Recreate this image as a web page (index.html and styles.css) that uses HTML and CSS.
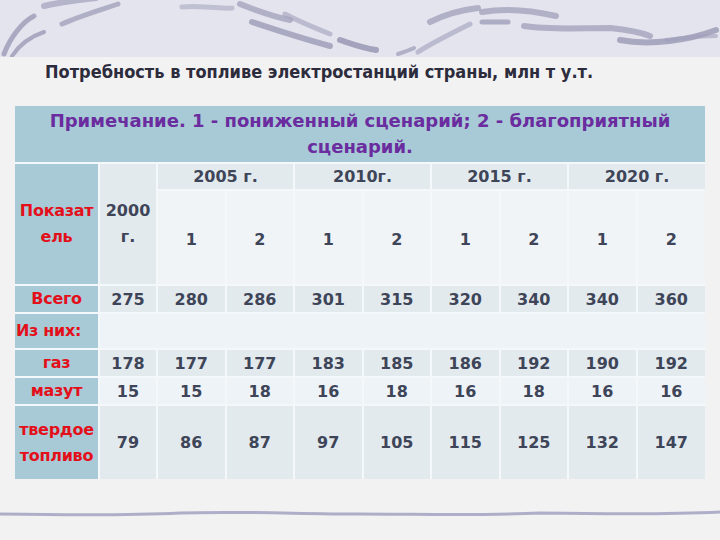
FILE: index.html
```
<!DOCTYPE html>
<html lang="ru">
<head>
<meta charset="utf-8">
<title>Потребность в топливе</title>
<link rel="stylesheet" href="styles.css">
</head>
<body>
<div class="banner">
  <svg class="strokes" width="720" height="57" viewBox="0 0 720 57">
    <g fill="none" stroke-linecap="round">
      <path d="M4 54 C10 38 22 22 34 16" stroke="#9a9ab6" stroke-width="5" opacity="0.8"/>
      <path d="M12 56 C20 44 32 36 44 32" stroke="#9090ae" stroke-width="4" opacity="0.7"/>
      <path d="M44 6 C60 2 78 0 96 -2" stroke="#a0a0bc" stroke-width="6" opacity="0.7"/>
      <path d="M62 24 C80 16 100 10 118 4" stroke="#9898b4" stroke-width="5" opacity="0.7"/>
      <path d="M182 7 C200 5 215 9 232 8" stroke="#a8a8c2" stroke-width="5" opacity="0.6"/>
      <path d="M240 4 C255 10 270 16 290 20" stroke="#9a9ab6" stroke-width="6" opacity="0.7"/>
      <path d="M252 22 C270 28 300 38 330 46" stroke="#9090ae" stroke-width="6" opacity="0.7"/>
      <path d="M285 14 C300 22 315 28 330 34" stroke="#a0a0bc" stroke-width="5" opacity="0.6"/>
      <path d="M340 40 C352 44 362 48 376 50" stroke="#8e8eac" stroke-width="6" opacity="0.75"/>
      <path d="M398 54 C404 52 410 50 414 48" stroke="#9a9ab6" stroke-width="4" opacity="0.7"/>
      <path d="M418 52 C430 44 450 34 470 24" stroke="#a0a0bc" stroke-width="5" opacity="0.6"/>
      <path d="M430 22 C446 14 460 10 478 8" stroke="#9a9ab6" stroke-width="6" opacity="0.7"/>
      <path d="M482 12 C505 8 530 10 556 16" stroke="#9a9ab6" stroke-width="6" opacity="0.7"/>
      <path d="M482 22 C490 22 500 22 508 22" stroke="#9494b2" stroke-width="5" opacity="0.7"/>
      <path d="M524 26 C550 30 580 28 610 28 C630 30 645 34 650 36" stroke="#9a9ab6" stroke-width="6" opacity="0.7"/>
      <path d="M620 40 C650 46 690 40 716 30" stroke="#8e8eac" stroke-width="6" opacity="0.7"/>
      <path d="M666 40 C684 38 700 36 716 36" stroke="#a0a0bc" stroke-width="4" opacity="0.6"/>
    </g>
  </svg>
</div>
<h1 class="title">Потребность в топливе электростанций страны, млн т у.т.</h1>
<table class="data">
  <colgroup>
    <col class="c-label"><col class="c-base">
    <col class="c-val"><col class="c-val"><col class="c-val"><col class="c-val">
    <col class="c-val"><col class="c-val"><col class="c-val"><col class="c-val">
  </colgroup>
  <tr class="r-note">
    <td class="note" colspan="10">Примечание. 1 - пониженный сценарий; 2 - благоприятный сценарий.</td>
  </tr>
  <tr class="r-year">
    <td class="lbl" rowspan="2">Показат<br>ель</td>
    <td class="base" rowspan="2">2000<br>г.</td>
    <td class="year" colspan="2">2005 г.</td>
    <td class="year" colspan="2">2010г.</td>
    <td class="year" colspan="2">2015 г.</td>
    <td class="year" colspan="2">2020 г.</td>
  </tr>
  <tr class="r-scen">
    <td>1</td><td>2</td><td>1</td><td>2</td><td>1</td><td>2</td><td>1</td><td>2</td>
  </tr>
  <tr class="r-total dark">
    <td class="lbl">Всего</td>
    <td>275</td><td>280</td><td>286</td><td>301</td><td>315</td><td>320</td><td>340</td><td>340</td><td>360</td>
  </tr>
  <tr class="r-sub light">
    <td class="lbl left">Из них:</td>
    <td colspan="9"></td>
  </tr>
  <tr class="r-gas dark">
    <td class="lbl">газ</td>
    <td>178</td><td>177</td><td>177</td><td>183</td><td>185</td><td>186</td><td>192</td><td>190</td><td>192</td>
  </tr>
  <tr class="r-oil light">
    <td class="lbl">мазут</td>
    <td>15</td><td>15</td><td>18</td><td>16</td><td>18</td><td>16</td><td>18</td><td>16</td><td>16</td>
  </tr>
  <tr class="r-solid dark">
    <td class="lbl">твердое<br>топливо</td>
    <td>79</td><td>86</td><td>87</td><td>97</td><td>105</td><td>115</td><td>125</td><td>132</td><td>147</td>
  </tr>
</table>
<div class="footer-line">
  <svg width="720" height="20" viewBox="0 0 720 20">
    <path d="M0 12 C60 13 120 14 180 11 C240 9 300 12 360 12 C420 12 480 14 540 11 C600 12 660 13 720 10" fill="none" stroke="#a2a2c0" stroke-width="3" opacity="0.85"/>
  </svg>
</div>
</body>
</html>
```
FILE: styles.css
```
html, body {
  margin: 0;
  padding: 0;
}
body {
  width: 720px;
  height: 540px;
  overflow: hidden;
  background: #f3f2f3;
  font-family: "DejaVu Sans", Verdana, sans-serif;
}
.banner {
  height: 57px;
  background: #e4e4ee;
}
.strokes {
  display: block;
}
.title {
  margin: 0;
  height: 47px;
  padding: 2px 0 0 45px;
  font-family: "DejaVu Sans Condensed", "DejaVu Sans", sans-serif;
  font-stretch: condensed;
  font-weight: bold;
  font-size: 18px;
  line-height: 26px;
  color: #2c2c3c;
}
.data {
  margin-left: 15px;
  width: 690px;
  table-layout: fixed;
  border-collapse: collapse;
  font-weight: bold;
  font-size: 16px;
  color: #3e4558;
}
.c-label { width: 84px; }
.c-base { width: 58px; }
.c-val { width: 68.5px; }
.data td {
  padding: 0;
  text-align: center;
  vertical-align: middle;
  border: 2px solid #f5f8fa;
  background: #e3eaee;
}
.data tr > td:first-child { border-left: none; }
.data tr > td:last-child { border-right: none; }
.r-note td { border-top: none; }
.note {
  height: 56px;
  background: #a7cad6 !important;
  color: #6a2c9e;
  font-size: 18px;
  line-height: 26px;
}
.r-year td { height: 25px; }
.year { background: #e3eaee; line-height: 20px; }
.r-scen td { height: 89px; background: #f0f4f7; padding-top: 4px; }
.base { background: #e3eaee !important; line-height: 26px; }
.lbl {
  background: #a7cad6 !important;
  color: #e3101b;
  line-height: 26px;
  letter-spacing: -0.3px;
}
.lbl.left { text-align: left; padding-left: 1px; }
.r-total td { height: 25px; }
.r-sub td { height: 34px; }
.r-gas td { height: 26px; }
.r-oil td { height: 25px; }
.r-solid td { height: 73px; border-bottom: none; }
.dark td { background: #e3eaee; }
.light td { background: #eef3f7; }
.footer-line {
  margin-top: 23px;
}
.footer-line svg { display: block; }
```
